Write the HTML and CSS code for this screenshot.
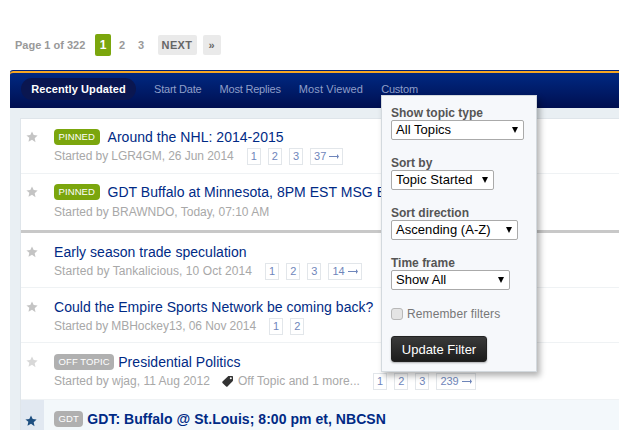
FILE: index.html
```html
<!DOCTYPE html>
<html lang="en">
<head>
<meta charset="utf-8">
<title>Topics</title>
<link rel="stylesheet" href="styles.css">
</head>
<body>
<svg class="defs" width="0" height="0" aria-hidden="true">
  <symbol id="star" viewBox="0 0 12 12"><path d="M6 .5l1.7 3.6 3.9.5-2.9 2.7.8 3.9L6 8.8l-3.5 1.9.8-3.9L.4 4.6l3.9-.5z"/></symbol>
  <symbol id="arrow" viewBox="0 0 10 5"><path d="M0 2h8V0l2 2.5L8 5V3H0z"/></symbol>
</svg>
<nav class="pagination">
  <span class="page-count">Page 1 of 322</span>
  <span class="page-current">1</span>
  <a class="page-num">2</a>
  <a class="page-num">3</a>
  <a class="page-next">NEXT</a>
  <a class="page-last">»</a>
</nav>
<section class="panel">
  <header class="tabs">
    <a class="tab tab-active">Recently Updated</a>
    <a class="tab">Start Date</a>
    <a class="tab">Most Replies</a>
    <a class="tab tab-wide">Most Viewed</a>
    <a class="tab">Custom</a>
  </header>
  <div class="list-wrap">
    <div class="list">
      <article class="row row-a">
        <svg class="star"><use href="#star"/></svg>
        <div class="body">
          <h3 class="title"><span class="badge badge-pinned">PINNED</span><a>Around the NHL: 2014-2015</a></h3>
          <p class="meta meta-tight">Started by LGR4GM, 26 Jun 2014
            <span class="pager"><a>1</a><a>2</a><a>3</a><a class="pager-more">37<svg class="arrow"><use href="#arrow"/></svg></a></span></p>
        </div>
      </article>
      <article class="row row-b">
        <svg class="star"><use href="#star"/></svg>
        <div class="body">
          <h3 class="title"><span class="badge badge-pinned">PINNED</span><a>GDT Buffalo at Minnesota, 8PM EST MSG Buffalo</a></h3>
          <p class="meta meta-low">Started by BRAWNDO, Today, 07:10 AM</p>
        </div>
      </article>
      <article class="row row-c">
        <svg class="star"><use href="#star"/></svg>
        <div class="body">
          <h3 class="title"><a>Early season trade speculation</a></h3>
          <p class="meta meta-wide">Started by Tankalicious, 10 Oct 2014
            <span class="pager"><a>1</a><a>2</a><a>3</a><a class="pager-more">14<svg class="arrow"><use href="#arrow"/></svg></a></span></p>
        </div>
      </article>
      <article class="row row-c">
        <svg class="star"><use href="#star"/></svg>
        <div class="body">
          <h3 class="title"><a>Could the Empire Sports Network be coming back?</a></h3>
          <p class="meta meta-tight">Started by MBHockey13, 06 Nov 2014
            <span class="pager"><a>1</a><a>2</a></span></p>
        </div>
      </article>
      <article class="row row-e">
        <svg class="star star-faint"><use href="#star"/></svg>
        <div class="body">
          <h3 class="title"><span class="badge badge-grey">OFF TOPIC</span><a class="title-tight">Presidential Politics</a></h3>
          <p class="meta">Started by wjag, 11 Aug 2012
            <svg class="tag" viewBox="0 0 13 13"><path d="M7.8 1h3.4c.5 0 .8.3.8.8v3.4c0 .4-.1.7-.4 1L6.5 11.5c-.4.4-1 .4-1.4 0L1.5 8c-.4-.4-.4-1 0-1.4L6.8 1.4c.3-.3.6-.4 1-.4z" fill="#333"/><circle cx="9.8" cy="3.2" r="1" fill="#fff"/></svg><span class="tags">Off Topic and 1 more...</span>
            <span class="pager"><a>1</a><a>2</a><a>3</a><a class="pager-more">239<svg class="arrow"><use href="#arrow"/></svg></a></span></p>
        </div>
      </article>
      <article class="row row-unread">
        <div class="star-cell">
          <svg class="star star-dark"><use href="#star"/></svg>
        </div>
        <div class="body">
          <h3 class="title title-bold"><span class="badge badge-grey">GDT</span><a class="title-tight">GDT: Buffalo @ St.Louis; 8:00 pm et, NBCSN</a></h3>
        </div>
      </article>
    </div>
  </div>
</section>
<form class="filter">
  <label class="filter-label">Show topic type</label>
  <div class="select select-type">All Topics</div>
  <label class="filter-label">Sort by</label>
  <div class="select select-sort">Topic Started</div>
  <label class="filter-label">Sort direction</label>
  <div class="select select-dir">Ascending (A-Z)</div>
  <label class="filter-label">Time frame</label>
  <div class="select select-time">Show All</div>
  <div class="remember"><span class="checkbox"></span>Remember filters</div>
  <button class="update" type="button">Update Filter</button>
</form>
</body>
</html>
```

FILE: styles.css
```css
* { box-sizing: border-box; }
html, body { margin: 0; height: 430px; overflow: hidden; background: #fff; }
body { font-family: "Liberation Sans", Arial, sans-serif; position: relative; padding: 34px 0 0 10px; width: 619px; }
a { text-decoration: none; }
.defs { position: absolute; }

.pagination { display: flex; align-items: center; height: 22px; margin-left: 5px; color: #999; font-size: 11px; font-weight: bold; }
.page-count { width: 80px; }
.page-current { width: 16px; height: 22px; line-height: 22px; text-align: center; background: #7ba60d; color: #fff; border-radius: 2px; font-size: 12px; }
.page-num { width: 19px; text-align: center; color: #999; font-size: 11px; margin-left: 1.5px; }
.page-num + .page-num { margin-left: 0; }
.page-next { width: 39px; height: 20px; line-height: 20px; text-align: center; margin-left: 7px; background: #eaeaea; color: #666; border-radius: 2px; font-size: 11px; letter-spacing: .4px; }
.page-last { width: 18px; height: 20px; line-height: 20px; text-align: center; margin-left: 6px; background: #eaeaea; color: #666; border-radius: 2px; }

.panel { margin-top: 14px; width: 620px; background: #e9eff3; }
.tabs { display: flex; align-items: center; height: 38px; padding: 0 0 1px 11px; border-top: 1px solid #00237a; box-shadow: inset 0 2px 0 #f5a623; background: linear-gradient(#002a85, #000f50); border-radius: 3px 0 0 0; font-size: 11px; }
.tab { color: #8f9fc9; margin-right: 18px; letter-spacing: -.2px; }
.tab-wide { letter-spacing: .15px; }
.tab-active { height: 22px; line-height: 22px; width: 115px; text-align: center; background: #0a1650; border-radius: 11px; color: #fff; font-weight: bold; letter-spacing: .1px; }

.list-wrap { padding: 10px 0 0 10px; }
.list { background: #fff; border: 1px solid #dfe5ea; border-right: 0; }

.row { display: flex; border-bottom: 1px solid #eff2f4; }
.row-a { height: 55px; padding-top: 9px; }
.row-b { height: 59px; padding-top: 9px; border-bottom: 3px solid #c8c8c8; }
.row-c { height: 55px; padding-top: 10px; }
.row-e { height: 57px; padding-top: 10px; }
.row-unread { height: 40px; background: #f3f8fb; border-bottom: 0; }

.star { flex: none; width: 12px; height: 12px; margin: 3px 0 0 5px; fill: #c4c4c4; }
.star-faint { fill: #d8d8d8; }
.star-dark { fill: #1d4e80; margin: 0; }
.star-cell { flex: none; width: 23px; height: 40px; background: #e1e8f1; padding: 13px 0 0 4px; margin-right: 10px; }
.row .star + .body { margin-left: 16px; }
.row-unread .body { padding-top: 10px; }

.title { margin: 0; display: flex; align-items: center; height: 18px; font-size: 14px; font-weight: normal; white-space: nowrap; letter-spacing: .04px; }
.title a { color: #002a85; margin-left: 8px; }
.title > a:first-child { margin-left: 0; }
.title a.title-tight { margin-left: 4px; }
.title-bold { font-weight: bold; }

.badge { height: 16px; line-height: 16px; padding: 0 4.5px; border-radius: 4px; color: #fff; font-size: 9.5px; font-weight: normal; letter-spacing: .1px; }
.badge-pinned { background: #7ba60d; }
.badge-grey { background: #b0b0b0; }

.meta { margin: 1px 0 0; height: 18px; display: flex; align-items: center; font-size: 12px; color: #a8a8a8; white-space: nowrap; }
.meta-tight { letter-spacing: -.06px; }
.meta-wide { letter-spacing: .08px; }
.meta-low { margin-top: 2px; }
.tag { width: 13px; height: 13px; margin-left: 11px; margin-right: 4px; }
.tags { letter-spacing: .05px; }
.pager { display: flex; gap: 7px; margin-left: 13px; letter-spacing: 0; }
.pager a { display: flex; align-items: center; justify-content: center; min-width: 14px; height: 17px; padding: 0 3px; border: 1px solid #e2e6ea; color: #6f86bb; font-size: 11px; }
.arrow { width: 10px; height: 5px; margin-left: 3px; fill: #6f86bb; }

.filter { position: absolute; left: 381px; top: 95px; width: 156px; height: 277px; padding: 10px 9px 0; background: #f6f8fb; border: 1px solid #d3d9de; box-shadow: 3px 4px 6px rgba(0, 0, 0, .3); }
.filter-label { display: block; height: 14px; line-height: 14px; font-size: 12px; font-weight: bold; color: #555; }
.select { position: relative; height: 20px; line-height: 18px; margin-bottom: 16px; padding-left: 4px; background: #fff; border: 1px solid #aaa; border-radius: 2px; font-size: 13px; letter-spacing: .05px; color: #000; }
.select::after { content: ""; position: absolute; right: 5px; top: 6px; border: 3.5px solid transparent; border-top: 6px solid #000; border-bottom: 0; }
.select-type { width: 133px; }
.select-sort { width: 103px; }
.select-dir { width: 127px; }
.select-time { width: 119px; }
.remember { display: flex; align-items: center; height: 16px; margin-top: 16px; font-size: 12px; letter-spacing: .12px; color: #777; }
.checkbox { width: 12px; height: 12px; margin-right: 4px; background: #e4e4e4; border: 1px solid #b8b8b8; border-radius: 3px; }
.update { display: block; margin-top: 14px; width: 96px; height: 26px; padding: 0; background: linear-gradient(#3a3a3a, #1c1c1c); border: 1px solid #222; border-radius: 3px; box-shadow: 0 1px 2px rgba(0,0,0,.3); color: #fff; font: 13px "Liberation Sans", Arial, sans-serif; }
```
